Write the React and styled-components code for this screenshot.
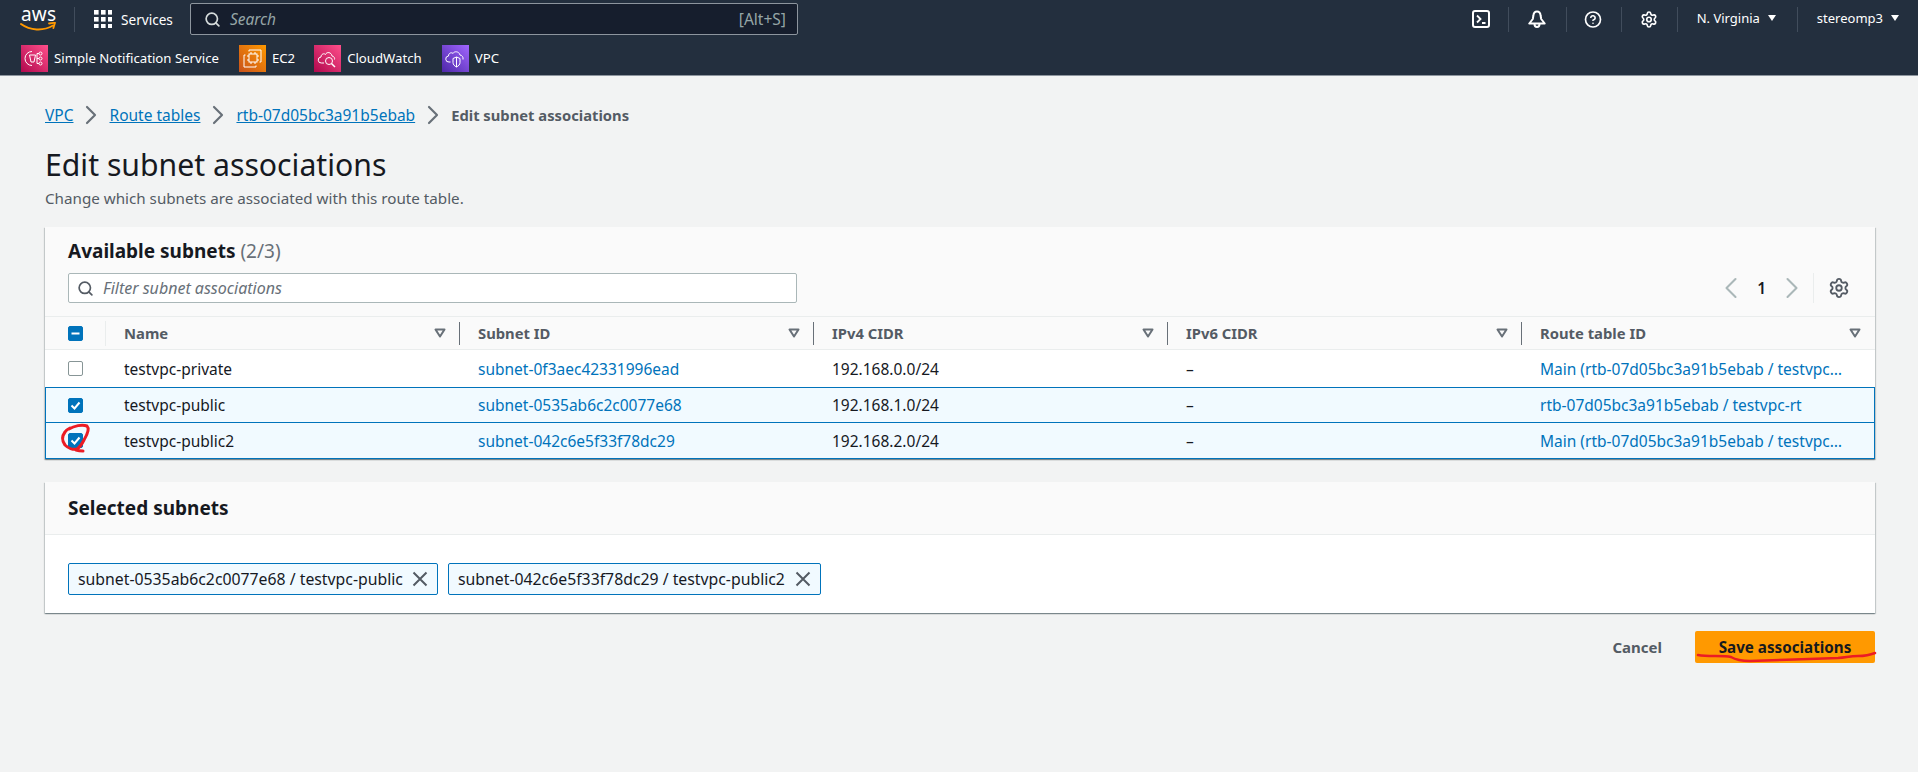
import React from "react";
import styled, { createGlobalStyle } from "styled-components";
import { Search, ChevronRight, ChevronLeft, Settings, CircleHelp } from "lucide-react";

const GlobalStyle = createGlobalStyle`
  html, body { margin: 0; padding: 0; background: #f2f3f3; }
  body { font-family: "Noto Sans", "Open Sans", Arial, sans-serif; font-size: 15.5px; color: #16191f; }
  * { box-sizing: border-box; }
`;

const Page = styled.div`
  width: 1918px;
  height: 772px;
  overflow: hidden;
  background: #f2f3f3;
`;

const TopNav = styled.header`
  height: 76px;
  background: #232f3e;
  border-bottom: 1px solid #8d959e;
  color: #fff;
`;

const NavRow = styled.div`
  height: 38px;
  display: flex;
  align-items: center;
  padding: 0 19px 0 20px;
`;

const ShortcutRow = styled.div`
  height: 37px;
  display: flex;
  align-items: center;
  padding: 3px 0 0 21px;
`;

const LogoBox = styled.div`
  width: 37px;
  height: 30px;
  position: relative;
  flex: none;
`;

const LogoText = styled.span`
  position: absolute;
  left: 1px;
  top: 1px;
  font-size: 19px;
  line-height: 19px;
  letter-spacing: 0.2px;
  color: #fff;
`;

const NavSep = styled.span`
  width: 1px;
  height: 25px;
  background: #414d5c;
  flex: none;
  margin: ${(p) => p.$margin || "0"};
`;

const ServicesButton = styled.div`
  display: flex;
  align-items: center;
  gap: 9px;
  margin: 0 17px 0 19px;
  font-size: 13.6px;
`;

const SearchBox = styled.div`
  width: 608px;
  height: 32px;
  background: #161e2d;
  border: 1px solid #8d959e;
  border-radius: 2px;
  display: flex;
  align-items: center;
  padding: 0 11px 0 13px;
  gap: 9px;
  color: #d1d5db;
`;

const SearchPlaceholder = styled.span`
  flex: 1;
  font-style: italic;
  font-size: 15.5px;
  color: #95a5a6;
`;

const SearchHint = styled.span`
  font-size: 15.5px;
  color: #95a5a6;
`;

const NavRight = styled.div`
  margin-left: auto;
  display: flex;
  align-items: center;
`;

const NavIconSlot = styled.span`
  width: 18px;
  height: 18px;
  display: flex;
  align-items: center;
  justify-content: center;
  flex: none;
`;

const NavMenu = styled.span`
  display: flex;
  align-items: center;
  gap: 8px;
  font-size: 13px;
  position: relative;
  top: -1px;
`;

const Caret = styled.span`
  width: 0;
  height: 0;
  border-left: 4px solid transparent;
  border-right: 4px solid transparent;
  border-top: 6px solid #fff;
`;

const Shortcut = styled.div`
  display: flex;
  align-items: center;
  gap: 6px;
  margin-right: ${(p) => p.$gap}px;
  font-size: 13.2px;
`;

const ShortcutIcon = styled.span`
  width: 27px;
  height: 27px;
  display: flex;
  align-items: center;
  justify-content: center;
  background: linear-gradient(45deg, ${(p) => p.$from}, ${(p) => p.$to});
  flex: none;
`;

const Main = styled.main`
  padding: 29px 43px 0 45px;
`;

const Breadcrumbs = styled.nav`
  height: 20px;
  display: flex;
  align-items: center;
`;

const Crumb = styled.a`
  color: #0073bb;
  text-decoration: underline;
`;

const CrumbCurrent = styled.span`
  color: #545b64;
  font-weight: 700;
  font-size: 14.75px;
`;

const CrumbSep = styled.span`
  display: flex;
  color: #687078;
  margin: 0 2px;
`;

const PageTitle = styled.h1`
  margin: 22px 0 0;
  font-size: 30.2px;
  line-height: 36px;
  font-weight: 400;
  color: #16191f;
`;

const PageDescription = styled.p`
  margin: 5px 0 0;
  font-size: 15.2px;
  line-height: 20px;
  color: #545b64;
`;

const Panel = styled.section`
  background: #fff;
  margin-top: ${(p) => p.$top}px;
  box-shadow: 0 1px 1px 0 rgba(0, 28, 36, 0.3), 1px 1px 1px 0 rgba(0, 28, 36, 0.15), -1px 1px 1px 0 rgba(0, 28, 36, 0.15);
`;

const PanelHeader = styled.div`
  background: #fafafa;
  padding: 11px 23px 0;
  height: 90px;
  border-bottom: 1px solid #eaeded;
`;

const PanelTitle = styled.h2`
  margin: 0;
  font-size: 19px;
  line-height: 26px;
  font-weight: 700;
  color: #16191f;
`;

const Count = styled.span`
  font-weight: 400;
  color: #687078;
`;

const ToolRow = styled.div`
  display: flex;
  align-items: center;
  justify-content: space-between;
  margin-top: 9px;
`;

const FilterInput = styled.div`
  width: 729px;
  height: 30px;
  background: #fff;
  border: 1px solid #aab7b8;
  border-radius: 2px;
  display: flex;
  align-items: center;
  gap: 9px;
  padding: 0 0 0 8px;
  color: #545b64;
`;

const FilterPlaceholder = styled.span`
  font-style: italic;
  font-size: 16px;
  color: #687078;
`;

const Pager = styled.div`
  display: flex;
  align-items: center;
  height: 30px;
  margin-right: 2px;
`;

const PageNum = styled.span`
  font-weight: 600;
  margin: 0 8px;
`;

const PagerSep = styled.span`
  width: 1px;
  height: 30px;
  background: #eaeded;
  margin: 0 14px 0 3px;
`;

const TableGrid = `
  display: grid;
  grid-template-columns: 61px 354px 354px 354px 354px minmax(0, 1fr);
`;

const HeadRow = styled.div`
  ${TableGrid}
  height: 33px;
  background: #fafafa;
  border-bottom: 1px solid #eaeded;
  align-items: center;
`;

const HeadCheckCell = styled.div`
  height: 25px;
  display: flex;
  align-items: center;
  padding-left: 23px;
  border-right: 1px solid #eaeded;
`;

const HeadCell = styled.div`
  height: 23px;
  display: flex;
  align-items: center;
  justify-content: space-between;
  padding: 0 13px 0 18px;
  font-size: 14.8px;
  font-weight: 700;
  color: #545b64;
  border-right: 1px solid ${(p) => (p.$last ? "transparent" : "#687078")};
`;

const SortIcon = styled.svg`
  width: 12px;
  height: 10px;
  flex: none;
`;

const Row = styled.div`
  ${TableGrid}
  height: ${(p) => p.$height}px;
  margin-top: ${(p) => p.$overlap}px;
  align-items: center;
  position: relative;
  background: ${(p) => (p.$selected ? "#f1faff" : "#fff")};
  box-shadow: ${(p) => (p.$selected ? "inset 0 0 0 1px #0073bb" : "none")};
`;

const CheckCell = styled.div`
  padding-left: 23px;
  display: flex;
  align-items: center;
`;

const CheckBox = styled.span`
  width: 15px;
  height: 15px;
  border-radius: 2px;
  display: flex;
  align-items: center;
  justify-content: center;
  background: ${(p) => (p.$on ? "#0073bb" : "#fff")};
  border: 1px solid ${(p) => (p.$on ? "#0073bb" : "#879596")};
`;

const Cell = styled.div`
  padding: 0 33px 0 18px;
  color: #16191f;
  white-space: nowrap;
  overflow: hidden;
  text-overflow: ellipsis;
`;

const LinkCell = styled(Cell)`
  color: #0073bb;
`;

const SelectedHeader = styled.div`
  background: #fafafa;
  height: 53px;
  padding: 0 23px;
  display: flex;
  align-items: center;
  border-bottom: 1px solid #eaeded;
`;

const ChipList = styled.div`
  display: flex;
  gap: 10px;
  padding: 28px 23px 18px;
`;

const Chip = styled.div`
  height: 32px;
  width: ${(p) => p.$width}px;
  display: flex;
  align-items: center;
  justify-content: space-between;
  padding: 0 9px;
  background: #f1faff;
  border: 1px solid #0073bb;
  border-radius: 2px;
  color: #16191f;
  font-size: 15.8px;
  white-space: nowrap;
`;

const Actions = styled.div`
  display: flex;
  justify-content: flex-end;
  align-items: center;
  margin-top: 18px;
  gap: 33px;
`;

const CancelButton = styled.span`
  font-weight: 700;
  font-size: 15px;
  color: #545b64;
`;

const SaveWrap = styled.div`
  position: relative;
  width: 180px;
  height: 32px;
`;

const SaveButton = styled.div`
  width: 100%;
  height: 100%;
  border-radius: 2px;
  background: #ff9900;
  color: #16191f;
  font-size: 15.2px;
  font-weight: 700;
  display: flex;
  align-items: center;
  justify-content: center;
`;

const Scribble = styled.svg`
  position: absolute;
  left: ${(p) => p.$left}px;
  top: ${(p) => p.$top}px;
  overflow: visible;
  pointer-events: none;
`;

const CheckCellWrap = styled.div`
  position: relative;
`;

const GridIcon = () => (
  <svg width="18" height="18" viewBox="0 0 18 18" fill="#fff">
    {[0, 7, 14].map((y) =>
      [0, 7, 14].map((x) => <rect key={`${x}-${y}`} x={x} y={y} width="4.6" height="4.6" />)
    )}
  </svg>
);

const AwsLogo = () => (
  <LogoBox>
    <LogoText>aws</LogoText>
    <svg width="37" height="12" viewBox="0 0 37 12" style={{ position: "absolute", left: 0, top: 18 }}>
      <path d="M1 2c9 6.5 22 7.5 32 1.5" fill="none" stroke="#ff9900" strokeWidth="2" strokeLinecap="round" />
      <path d="M29 1.5l6-.8-1.6 5.4" fill="none" stroke="#ff9900" strokeWidth="1.8" strokeLinecap="round" strokeLinejoin="round" />
    </svg>
  </LogoBox>
);

const TerminalIcon = () => (
  <svg width="18" height="18" viewBox="0 0 18 18" fill="none" stroke="#fff" strokeWidth="2">
    <rect x="1" y="1" width="16" height="16" rx="2" />
    <path d="M5 5.5l3.5 3.5L5 12.5M10 13h3.5" strokeWidth="1.8" />
  </svg>
);

const BellIcon = () => (
  <svg width="18" height="18" viewBox="0 0 18 18" fill="none" stroke="#fff" strokeWidth="2" strokeLinejoin="round">
    <path d="M9 1.5c-2.5 0-3.4 2-3.6 4L4.8 9 1.3 13.5h15.4L13.2 9l-.6-3.5C12.4 3.5 11.5 1.5 9 1.5z" />
    <path d="M6.5 14c0 2 1 3 2.5 3s2.5-1 2.5-3" />
  </svg>
);

const SnsGlyph = () => (
  <svg width="21" height="21" viewBox="0 0 21 21" fill="none" stroke="#fff" strokeWidth="1">
    <path d="M8 3.5a7 7 0 0 0 0 14" />
    <path d="M5.5 7h6l-1.5 7H7z" />
    <path d="M13 5.5h2M13 10.5h2M13 15.5h2M13 5.5v10" />
    <circle cx="16.5" cy="5.5" r="1.5" />
    <circle cx="16.5" cy="10.5" r="1.5" />
    <circle cx="16.5" cy="15.5" r="1.5" />
  </svg>
);

const Ec2Glyph = () => (
  <svg width="21" height="21" viewBox="0 0 21 21" fill="none" stroke="#fff" strokeWidth="1">
    <rect x="7" y="6" width="8" height="8" />
    <path d="M7 3.5V2h12v12h-1.5M3.5 7H2v12h12v-1.5" />
    <path d="M9 4v2M13 4v2M9 14v2M13 14v2M5 8h2M5 12h2M15 8h2M15 12h2" />
  </svg>
);

const CloudWatchGlyph = () => (
  <svg width="21" height="21" viewBox="0 0 21 21" fill="none" stroke="#fff" strokeWidth="1">
    <path d="M7 15H4.5a3 3 0 0 1-.5-6c0-3 3-4 4.5-2.5C9.5 3.5 14.5 4 15 8c2 .3 3 2 2.500 3.500" />
    <circle cx="12" cy="13" r="3.5" />
    <path d="M14.5 15.5L18 19" strokeWidth="1.5" />
  </svg>
);

const VpcGlyph = () => (
  <svg width="21" height="21" viewBox="0 0 21 21" fill="none" stroke="#fff" strokeWidth="1">
    <path d="M5.5 14H4a3 3 0 0 1-.5-6c0-3 3-4 4.500-2.500C9 3 14 3 15 7c2 .3 3.5 2 3 4.5" />
    <path d="M8 10.5l3.5-1.5 3.5 1.5v4c0 2-1.5 3.5-3.5 4.5C9.5 18 8 16.5 8 14.5z" />
    <path d="M11.5 9v10" />
  </svg>
);

const SortCaret = () => (
  <SortIcon viewBox="0 0 12 10">
    <path d="M1.5 1.5h9L6 8.5z" fill="none" stroke="#687078" strokeWidth="2" strokeLinejoin="round" />
  </SortIcon>
);

const Tick = () => (
  <svg width="11" height="11" viewBox="0 0 11 11" fill="none" stroke="#fff" strokeWidth="2">
    <path d="M1.5 5.5l3 3 5-6" />
  </svg>
);

const Dash = () => (
  <svg width="11" height="11" viewBox="0 0 11 11" stroke="#fff" strokeWidth="2">
    <path d="M1.5 5.5h8" />
  </svg>
);

const ChipClose = () => (
  <svg width="16" height="16" viewBox="0 0 16 16" fill="none" stroke="#545b64" strokeWidth="2">
    <path d="M1.5 1.5l13 13M14.5 1.5l-13 13" />
  </svg>
);

const columns = ["Name", "Subnet ID", "IPv4 CIDR", "IPv6 CIDR", "Route table ID"];

const rows = [
  {
    name: "testvpc-private",
    subnet: "subnet-0f3aec42331996ead",
    cidr: "192.168.0.0/24",
    route: "Main (rtb-07d05bc3a91b5ebab / testvpc-rt)",
    selected: false,
    height: 37,
    overlap: 0,
  },
  {
    name: "testvpc-public",
    subnet: "subnet-0535ab6c2c0077e68",
    cidr: "192.168.1.0/24",
    route: "rtb-07d05bc3a91b5ebab / testvpc-rt",
    selected: true,
    height: 36,
    overlap: 0,
  },
  {
    name: "testvpc-public2",
    subnet: "subnet-042c6e5f33f78dc29",
    cidr: "192.168.2.0/24",
    route: "Main (rtb-07d05bc3a91b5ebab / testvpc-rt)",
    selected: true,
    circled: true,
    height: 37,
    overlap: -1,
  },
];

const shortcuts = [
  { label: "Simple Notification Service", glyph: <SnsGlyph />, gap: 20, tint: ["#b0084d", "#ff4f8b"] },
  { label: "EC2", glyph: <Ec2Glyph />, gap: 19, tint: ["#c8511b", "#ff9900"] },
  { label: "CloudWatch", glyph: <CloudWatchGlyph />, gap: 20, tint: ["#b0084d", "#ff4f8b"] },
  { label: "VPC", glyph: <VpcGlyph />, gap: 0, tint: ["#4d27a8", "#a166ff"] },
];

const BreadcrumbArrow = () => (
  <CrumbSep>
    <ChevronRight size={32} strokeWidth={1.6} />
  </CrumbSep>
);

export default function App() {
  return (
    <Page>
      <GlobalStyle />
      <TopNav>
        <NavRow>
          <AwsLogo />
          <NavSep $margin="0 0 0 17px" />
          <ServicesButton>
            <GridIcon />
            Services
          </ServicesButton>
          <SearchBox>
            <Search size={17} strokeWidth={2.4} color="#d5dbdb" />
            <SearchPlaceholder>Search</SearchPlaceholder>
            <SearchHint>[Alt+S]</SearchHint>
          </SearchBox>
          <NavRight>
            <NavIconSlot><TerminalIcon /></NavIconSlot>
            <NavSep $margin="0 19px 0 18px" />
            <NavIconSlot><BellIcon /></NavIconSlot>
            <NavSep $margin="0 17px 0 20px" />
            <NavIconSlot><CircleHelp size={21} strokeWidth={2.2} /></NavIconSlot>
            <NavSep $margin="0 18px 0 19px" />
            <NavIconSlot><Settings size={21} strokeWidth={2.2} /></NavIconSlot>
            <NavSep $margin="0 19px" />
            <NavMenu>N. Virginia <Caret /></NavMenu>
            <NavSep $margin="0 19px 0 21px" />
            <NavMenu>stereomp3 <Caret /></NavMenu>
          </NavRight>
        </NavRow>
        <ShortcutRow>
          {shortcuts.map((s) => (
            <Shortcut key={s.label} $gap={s.gap}>
              <ShortcutIcon $from={s.tint[0]} $to={s.tint[1]}>{s.glyph}</ShortcutIcon>
              {s.label}
            </Shortcut>
          ))}
        </ShortcutRow>
      </TopNav>

      <Main>
        <Breadcrumbs>
          <Crumb>VPC</Crumb>
          <BreadcrumbArrow />
          <Crumb>Route tables</Crumb>
          <BreadcrumbArrow />
          <Crumb>rtb-07d05bc3a91b5ebab</Crumb>
          <BreadcrumbArrow />
          <CrumbCurrent>Edit subnet associations</CrumbCurrent>
        </Breadcrumbs>
        <PageTitle>Edit subnet associations</PageTitle>
        <PageDescription>Change which subnets are associated with this route table.</PageDescription>

        <Panel $top={19}>
          <PanelHeader>
            <PanelTitle>Available subnets <Count>(2/3)</Count></PanelTitle>
            <ToolRow>
              <FilterInput>
                <Search size={17} strokeWidth={2.4} />
                <FilterPlaceholder>Filter subnet associations</FilterPlaceholder>
              </FilterInput>
              <Pager>
                <ChevronLeft size={36} strokeWidth={1.4} color="#aab7b8" />
                <PageNum>1</PageNum>
                <ChevronRight size={36} strokeWidth={1.4} color="#aab7b8" />
                <PagerSep />
                <Settings size={22} strokeWidth={2} color="#545b64" />
              </Pager>
            </ToolRow>
          </PanelHeader>
          <HeadRow>
            <HeadCheckCell><CheckBox $on><Dash /></CheckBox></HeadCheckCell>
            {columns.map((c, i) => (
              <HeadCell key={c} $last={i === columns.length - 1}>
                {c}
                <SortCaret />
              </HeadCell>
            ))}
          </HeadRow>
          {rows.map((r) => (
            <Row key={r.name} $selected={r.selected} $height={r.height} $overlap={r.overlap}>
              <CheckCell>
                <CheckCellWrap>
                  <CheckBox $on={r.selected}>{r.selected && <Tick />}</CheckBox>
                  {r.circled && (
                    <Scribble $left={-7} $top={-9} width="30" height="29" viewBox="0 0 30 29" fill="none">
                      <path d="M8 5C13 2 21 0 26 2c3 3 0 9-3 14-2 4-4 7-7 9-4 1-9-1-12-4C1 17 1 12 4 8c1-2 3-3 5-4" stroke="#ec1c24" strokeWidth="3" strokeLinecap="round" />
                      <path d="M15 26c3 1 5 1 7 1" stroke="#ec1c24" strokeWidth="3" strokeLinecap="round" />
                    </Scribble>
                  )}
                </CheckCellWrap>
              </CheckCell>
              <Cell>{r.name}</Cell>
              <LinkCell>{r.subnet}</LinkCell>
              <Cell>{r.cidr}</Cell>
              <Cell>–</Cell>
              <LinkCell>{r.route}</LinkCell>
            </Row>
          ))}
        </Panel>

        <Panel $top={23}>
          <SelectedHeader>
            <PanelTitle>Selected subnets</PanelTitle>
          </SelectedHeader>
          <ChipList>
            <Chip $width={370}>subnet-0535ab6c2c0077e68 / testvpc-public <ChipClose /></Chip>
            <Chip $width={373}>subnet-042c6e5f33f78dc29 / testvpc-public2 <ChipClose /></Chip>
          </ChipList>
        </Panel>

        <Actions>
          <CancelButton>Cancel</CancelButton>
          <SaveWrap>
            <SaveButton>Save associations</SaveButton>
            <Scribble $left={3} $top={20} width="177" height="12" viewBox="0 0 177 12" fill="none">
              <path d="M0 4C10 6 25 4 33 6c5 3 11 4 19 4 28-1 63-2 88-3 10-1 12-2 20-2 8 0 12-1 17-3" stroke="#ec1c24" strokeWidth="2.5" strokeLinecap="round" />
            </Scribble>
          </SaveWrap>
        </Actions>
      </Main>
    </Page>
  );
}
